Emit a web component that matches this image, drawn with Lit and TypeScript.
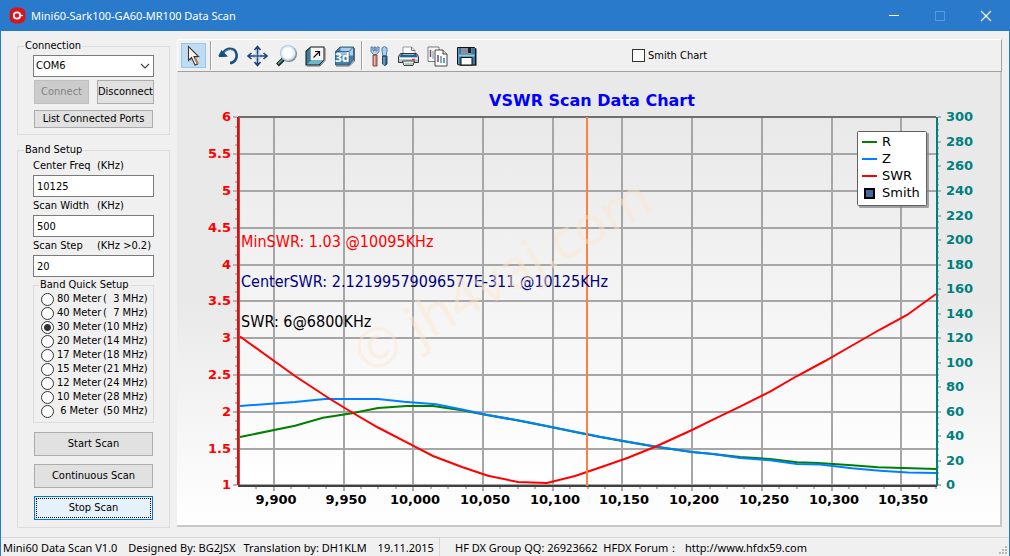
import { LitElement, html, svg, css } from "lit";
import { customElement, property, state } from "lit/decorators.js";

type Pt = [number, number];

const R_LINE: Pt[] = [
  [240, 437], [295, 425.7], [323, 417.7], [352, 413.3], [378, 408], [407, 406], [433, 406],
  [462, 410.3], [488, 415.3], [518, 420.5], [547, 426.3], [575, 432], [600, 437], [628, 442],
  [657, 447], [692, 452], [713, 454], [740, 457], [770, 459], [797, 462.3], [818, 463],
  [852, 465.3], [878, 467.3], [936, 469],
];
const Z_LINE: Pt[] = [
  [240, 406], [295, 402], [325, 399], [378, 399], [404, 401.7], [436, 404.3], [462, 409.5],
  [488, 415], [518, 420.3], [547, 426], [575, 431.7], [600, 436.7], [628, 441.7], [657, 446.7],
  [692, 452], [713, 454], [740, 458], [770, 460.3], [797, 463.9], [820, 464.4], [852, 468.3],
  [880, 470.7], [908, 472.5], [936, 473],
];
const SWR_LINE: Pt[] = [
  [240, 336.5], [295, 376], [330, 399], [353, 413], [378, 427.5], [413, 445.7], [433, 456],
  [462, 467], [488, 475.7], [518, 482], [547, 483], [575, 476], [600, 467.5], [628, 457.7],
  [657, 446], [692, 430], [713, 419.7], [740, 406.7], [770, 391.7], [797, 376], [825, 361],
  [853, 345], [880, 329.5], [907, 315], [936, 294],
];

const points = (line: Pt[]) => line.map((p) => p.join(",")).join(" ");
const range = (n: number) => Array.from({ length: n }, (_, i) => i);
const freqX = (f: number) => Math.floor(239 + (f - 9875) * 1.3945 + 0.45);
const swrY = (v: number) => Math.round(485.4 - (v - 1) * 73.6);
const ohmY = (v: number) => Math.round(485.4 - v * 1.2267);

@customElement("scan-chart")
class ScanChart extends LitElement {
  static styles = css`
    :host { display: block; }
    .chart { display: block; width: 100%; height: auto; }
    text { font-family: "DejaVu Sans", Verdana, sans-serif; font-size: 13px; }
    .title { font-size: 16px; font-weight: bold; fill: #0000ff; text-anchor: middle; }
    .axis { font-weight: bold; }
    .left { fill: #ff0000; text-anchor: end; }
    .right { fill: #008080; }
    .bottom { text-anchor: middle; }
    .note { font-family: "DejaVu Sans Condensed", "DejaVu Sans", Tahoma, sans-serif; font-size: 16px; }
    .red { fill: #ff0000; }
    .navy { fill: #000080; }
    .mark { font-family: "Noto Sans", sans-serif; font-size: 54px; fill: #ffe6cc; opacity: 0.45; }
    .grid { stroke: #a6a6a6; stroke-width: 2; }
    .tick { stroke: #b4b4b4; stroke-width: 2; }
    .series { fill: none; stroke-width: 2; }
  `;

  render() {
    const freqs = range(10).map((i) => 9900 + i * 50);
    const swrs = range(11).map((i) => 1 + i * 0.5);
    const ohms = range(16).map((i) => i * 20);
    return html`
      <svg class="chart" viewBox="177 72 825 455" role="img" aria-label="VSWR Scan Data Chart">
        <defs>
          <linearGradient id="panel" x1="0" y1="0" x2="0" y2="1">
            <stop offset="0" stop-color="#e9e9e9" /><stop offset="0.5" stop-color="#e9e9e9" />
            <stop offset="1" stop-color="#ffffff" />
          </linearGradient>
          <linearGradient id="plot" x1="0" y1="0" x2="0" y2="1">
            <stop offset="0" stop-color="#e9e9e9" /><stop offset="1" stop-color="#ffffff" />
          </linearGradient>
        </defs>
        <rect x="177" y="72" width="825" height="455" fill="#c8c8c8" />
        <rect x="177" y="72" width="823" height="453" fill="url(#panel)" />
        <rect x="239" y="117" width="698" height="368" fill="url(#plot)" />
        <text class="title" x="592" y="106">VSWR Scan Data Chart</text>

        ${freqs.map((f) => svg`<line class="grid" x1=${freqX(f)} x2=${freqX(f)} y1="117" y2="491" />`)}
        ${swrs.map((v) => svg`<line class="grid" x1="239" x2="936" y1=${swrY(v)} y2=${swrY(v)} />
          <line class="tick" x1="233" x2="237" y1=${swrY(v)} y2=${swrY(v)} />`)}
        ${range(40).map((i) => svg`<line class="tick" x1="235" x2="237" y1=${swrY(1 + i * 0.125)} y2=${swrY(1 + i * 0.125)} />`)}
        ${range(40).map((i) => svg`<line class="tick" x1=${freqX(9887.5 + i * 12.5)} x2=${freqX(9887.5 + i * 12.5)} y1="486" y2="489" />`)}
        ${ohms.map((v) => svg`<line class="tick" x1="938" x2="941" y1=${ohmY(v)} y2=${ohmY(v)} />`)}
        ${range(60).map((i) => svg`<line class="tick" x1="937" x2="939" y1=${ohmY(i * 5)} y2=${ohmY(i * 5)} />`)}

        <line x1="238" x2="936" y1="117" y2="117" stroke="#6e6e6e" stroke-width="2" />
        <line x1="238" x2="937" y1="486" y2="486" stroke="#404040" stroke-width="2" />
        <rect x="936" y="117" width="2" height="369" fill="#008080" />
        <rect x="237" y="117" width="2" height="368" fill="#ff0000" />
        <rect x="239" y="118" width="1" height="367" fill="#8c6060" />

        <polyline class="series" stroke="#008000" points=${points(R_LINE)} />
        <polyline class="series" stroke="#0080ff" points=${points(Z_LINE)} />
        <polyline class="series" stroke="#ff0000" points=${points(SWR_LINE)} />
        <line x1="587" x2="587" y1="117" y2="486" stroke="#ff8040" stroke-width="2" />

        ${swrs.map((v) => svg`<text class="axis left" x="231" y=${swrY(v) + 4}>${v}</text>`)}
        ${ohms.map((v) => svg`<text class="axis right" x="946" y=${ohmY(v) + 4}>${v}</text>`)}
        ${freqs.map((f) => svg`<text class="axis bottom" x=${freqX(f) + 2} y="504">${f.toLocaleString("en-US")}</text>`)}

        <text class="note red" x="241" y="247">MinSWR: 1.03 @10095KHz</text>
        <text class="note navy" x="241" y="287">CenterSWR: 2.12199579096577E-311 @10125KHz</text>
        <text class="note" x="241" y="327">SWR: 6@6800KHz</text>
        <text class="mark" transform="translate(368 375) rotate(-30)">© jh4vaj.com</text>

        <rect x="859" y="133" width="70" height="75" rx="1" fill="#808080" opacity="0.7" />
        <rect x="857.5" y="131.5" width="69" height="74" rx="1" fill="#fff" stroke="#606060" />
        <line x1="862" x2="877" y1="142" y2="142" stroke="#008000" stroke-width="2" />
        <line x1="862" x2="877" y1="159" y2="159" stroke="#0080ff" stroke-width="2" />
        <line x1="862" x2="877" y1="176" y2="176" stroke="#ff0000" stroke-width="2" />
        <rect x="865" y="189" width="9" height="9" fill="#4466a3" stroke="#000" stroke-width="2" />
        <text x="882" y="146">R</text>
        <text x="882" y="163">Z</text>
        <text x="882" y="180">SWR</text>
        <text x="882" y="197">Smith</text>
      </svg>
    `;
  }
}

const ICONS: Record<string, unknown> = {
  pointer: svg`<path d="M8 5l8.500 8.500h-4l3.500 7-2.500 1-3.300-7L8 17z" transform="translate(1 1)" fill="#777"/><path d="M7.500 3.500v14l3-3 3.500 7.500 2.500-1-3.500-7.500h4.500z" fill="#fff8ee" stroke="#433" stroke-width="1.100"/><path d="M14 15l3 6" stroke="#a87c5c" stroke-width="2"/>`,
  undo: svg`<path d="M6.500 11C10 4 19 4 20.500 11C21.500 16 18 20 14 20" fill="none" stroke="#174f80" stroke-width="2.500"/><path d="M2.500 12.500L5.500 7l6.500 6.500-4 .5H3z" fill="#174f80"/><path d="M8 9.500C11 5.800 16 5.800 18.500 8.500" fill="none" stroke="#5e98c6" stroke-width="1"/>`,
  move: svg`<path d="M12.500 4v18M3.500 13h18M9.500 7l3-3.500 3 3.500M9.500 19l3 3.500 3-3.500M6.500 10L3 13l3.500 3M18.500 10l3.500 3-3.500 3" fill="none" stroke="#1d3f7c" stroke-width="1.600"/><path d="M11 8v9M14 8v9M8 11.500h9M8 14.500h9" stroke="#9fb9dc" stroke-width=".6"/>`,
  zoom: svg`<path d="M9.500 16l-6 6" stroke="#222" stroke-width="4"/><path d="M9 16l-5 5" stroke="#48a090" stroke-width="1.700"/><circle cx="15" cy="11" r="8" fill="#858585"/><circle cx="14" cy="10" r="8" fill="#a9c3dc"/><circle cx="14" cy="10" r="7.200" fill="#d8e9f7"/><circle cx="13.800" cy="10" r="5.500" fill="#fff"/>`,
  depth: svg`<path d="M2.500 8l5-4.500h14v13.500l-5 5.500h-14z" fill="#111"/><path d="M3.500 8.500l4-4v13l-4 4z" fill="#367f9c"/><path d="M3.500 21.500l4.500-4.500h12.500l-4.500 4.500z" fill="#6fb6cf"/><path d="M7.500 4.500h13v12.500h-13z" fill="#f6f6f6"/><path d="M10.500 14.500l6-6M12 8.500H16.500V13" fill="none" stroke="#111" stroke-width="1.200"/><path d="M22 5v12.500l-5 5.500H4" fill="none" stroke="#666"/>`,
  three: svg`<path d="M3.500 8.500L8 4h13.500v13l-4.500 5H3.500z" fill="#427fa8"/><path d="M8.500 4.500h12.500v8H8.500z" fill="#a9d0f1"/><path d="M4 9h13v13H4z" fill="#3f83ab"/><path d="M5 9h12v4H5z" fill="#8fbde2"/><path d="M3.500 8.500h13.500v13.500H3.500zM3.500 8.500L8 4h13.500v13l-4.500 5M17 8.500L21.500 4" fill="none" stroke="#2b5a78" stroke-width=".9"/><path d="M22.500 5v13l-5 5H4" fill="none" stroke="#666"/>`,
  tools: svg`<path d="M4 4v4.500l2.500 3h3l2.500-3V4h-2v4H8.800V4H7.200v4H6V4z" fill="#b8d6f0" stroke="#466c9e" stroke-width=".9"/><path d="M6 12h4v11H6z" fill="#d88a78" stroke="#704038" stroke-width=".9"/><path d="M7.500 13v9" stroke="#f3b8a7"/><path d="M15 5q2.500-3 5 0v3l-1 5h-3l-1-5z" fill="#a9d0f1" stroke="#466c9e" stroke-width=".9"/><path d="M15.500 13h4.500v8q-2 3-4.500 0z" fill="#356a93" stroke="#193b56" stroke-width=".9"/><path d="M17 14v8" stroke="#9cc8e6"/>`,
  print: svg`<path d="M7 4h8.500l3.500 3.500v5H7z" fill="#fff" stroke="#999"/><path d="M15.500 4v3.500h3.500" fill="none" stroke="#777"/><path d="M4.500 10.500h16l2 3v6h-20v-6z" fill="#b4c8d8" stroke="#333"/><path d="M5 11h15l1.500 3h-18z" fill="#2a628a"/><path d="M7 11.500h11" stroke="#78c6e6"/><path d="M3 15.500h19" stroke="#fff"/><path d="M16 16.500h3" stroke="#f22" stroke-width="1.500"/><path d="M6.500 18h12l-1.500 4.500H8z" fill="#eee" stroke="#444"/><path d="M9 21h8" stroke="#58a890"/>`,
  copy: svg`<path d="M3 4h11v14.500H3z" fill="#fff" stroke="#777"/><path d="M5.500 7v7" stroke="#704080" stroke-width="1.500"/><path d="M8 8v8" stroke="#609080"/><path d="M10 7h8l4 4v12H10z" fill="#fff" stroke="#444"/><path d="M18 7v4h4" fill="#ddd" stroke="#444"/><path d="M13 12v7" stroke="#704090" stroke-width="1.500"/><path d="M16 13v7" stroke="#50a078" stroke-width="1.500"/><path d="M19 15v5" stroke="#4a70b8" stroke-width="1.500"/>`,
  save: svg`<path d="M5 5h17l1 1v17H6z" fill="#888"/><path d="M3.500 4.500h17l1 1v16.500H4.500l-1-1z" fill="#3a79a0" stroke="#111"/><path d="M4.500 5v16" stroke="#5aa0c8"/><path d="M7 5h10.500v6H7z" fill="#8a8fa0"/><path d="M14 5h3v5h-3z" fill="#222"/><path d="M5 12.500h15.500" stroke="#87c9e8" stroke-width="2"/><path d="M7 14.500h11v7.500H7z" fill="#fff" stroke="#111"/>`,
};

@customElement("tool-button")
class ToolButton extends LitElement {
  @property() icon = "pointer";
  @property() label = "";
  @property({ type: Boolean }) active = false;
  static styles = css`
    :host { display: block; }
    .tool { display: block; width: 25px; height: 25px; padding: 0; border: 1px solid transparent; background: none; }
    .active { background: #c0dcf3; border-color: #90c8f6; }
    .glyph { display: block; width: 25px; height: 25px; margin: -1px; overflow: visible; }
    .three { font: bold 12px "Noto Sans", sans-serif; fill: #fff; }
  `;
  render() {
    return html`<button class="tool ${this.active ? "active" : ""}" aria-label=${this.label}>
      <svg class="glyph" viewBox="0 0 25 25">
        ${ICONS[this.icon]}
        ${this.icon === "three" ? svg`<text class="three" x="3" y="19">3d</text>` : ""}
      </svg>
    </button>`;
  }
}

const BANDS = [
  ["80 Meter", "(\u00a0 3 MHz)"], ["40 Meter", "(\u00a0 7 MHz)"], ["30 Meter", "(10 MHz)"],
  ["20 Meter", "(14 MHz)"], ["17 Meter", "(18 MHz)"], ["15 Meter", "(21 MHz)"],
  ["12 Meter", "(24 MHz)"], ["10 Meter", "(28 MHz)"], ["\u00a06 Meter", "(50 MHz)"],
];
const FIELDS = [
  ["center", "Center Freq", "(KHz)", "10125"],
  ["width", "Scan Width", "(KHz)", "500"],
  ["step", "Scan Step", "(KHz >0.2)", "20"],
];

@customElement("app-root")
class AppRoot extends LitElement {
  @state() band = 2;
  static styles = css`
    :host {
      display: flex; flex-direction: column; min-height: 100vh; box-sizing: border-box;
      border: 1px solid #2a7acc; border-top: 0; background: #f0f0f0; color: #000;
      font: 11px/14px "DejaVu Sans Condensed", "DejaVu Sans", Tahoma, sans-serif;
    }
    * { box-sizing: border-box; }
    button, input, select { font: inherit; color: inherit; border-radius: 0; margin: 0; }
    .titlebar { display: flex; align-items: center; height: 31px; background: #2a7acc; color: #fff; padding-left: 8px; font: 11px/16px "Noto Sans", "Open Sans", sans-serif; }
    .logo { width: 17px; height: 17px; margin-right: 5px; }
    .name { flex: 1; }
    .win { width: 46px; height: 31px; border: 0; padding: 0; background: none; color: #fff; display: grid; place-items: center; }
    .win svg { width: 12px; height: 12px; }
    .dim { color: #6fa6df; }
    .body { flex: 1; display: flex; align-items: flex-start; padding: 8px 7px 9px 0; }
    .side { flex: none; width: 176px; padding: 0 7px 0 16px; display: flex; flex-direction: column; gap: 8px; }
    .group { margin: 0; padding: 2px 15px 6px; border: 1px solid #dcdcdc; min-width: 0; }
    .group legend { padding: 0 1px; margin-left: -9px; line-height: 14px; }
    .band { padding: 0 15px 7px; }
    .combo { position: relative; }
    .select { display: block; width: 100%; height: 22px; padding: 0 2px; border: 1px solid #7a7a7a; background: #fff; appearance: none; }
    .chevron { position: absolute; right: 4px; top: 7px; width: 10px; height: 8px; pointer-events: none; }
    .row { display: flex; justify-content: space-between; margin: 3px 0 6px 1px; }
    .btn { display: block; width: 100%; height: 24px; padding: 0; border: 1px solid #adadad; background: #e1e1e1; text-align: center; white-space: nowrap; }
    .row .connect { width: 55px; color: #838383; background: #cccccc; border-color: #bfbfbf; }
    .row .disconnect { width: 57px; }
    .short { height: 18px; }
    .inset { padding: 0 1px; }
    .actions { display: flex; flex-direction: column; gap: 8px; padding: 9px 1px 0; }
    .focused { background: #e5f1fb; border-color: #0078d7; outline: 1px dotted #000; outline-offset: -3px; }
    .caption { display: flex; height: 18px; align-items: center; }
    .caption-name { width: 64px; white-space: nowrap; }
    .field { display: block; width: 100%; height: 22px; border: 1px solid #7a7a7a; background: #fff; padding: 0 3px; outline: 0; }
    .quick { padding: 0 0 4px 7px; margin-top: 1px; }
    .quick legend { margin-left: -2px; }
    .option { display: flex; align-items: center; height: 14px; white-space: nowrap; }
    .radio { appearance: none; width: 13px; height: 13px; border: 1px solid #333; border-radius: 50%; background: #fff; margin-right: 3px; flex: none; }
    .radio:checked { background: radial-gradient(circle, #333 0 3px, #fff 4px); }
    .meter { width: 46px; }
    .main { flex: 1; min-width: 0; }
    .toolbar { display: flex; align-items: center; height: 33px; padding: 0 3px; border: 1px solid; border-color: #fff #a0a0a0 #a0a0a0 #fff; gap: 4px; }
    .sep { width: 2px; height: 29px; border-left: 1px solid #a0a0a0; border-right: 1px solid #fff; }
    .smith { display: flex; align-items: center; gap: 3px; margin-left: 149px; }
    .check { appearance: none; width: 13px; height: 13px; border: 1px solid #333; background: #fff; }
    .status { display: flex; height: 19px; border-top: 1px solid #d7d7d7; font: 11px/19px "Noto Sans", "Open Sans", sans-serif; white-space: pre; }
    .status-left { width: 438px; padding-left: 2px; }
    .status-right { flex: 1; border-left: 1px solid #d7d7d7; padding-left: 15px; }
    .gap { margin-left: 8px; }
    .grip { width: 11px; height: 11px; align-self: flex-end; }
  `;

  render() {
    return html`
      <header class="titlebar">
        <svg class="logo" viewBox="0 0 17 17"><rect x=".5" y=".5" width="16" height="16" rx="6" fill="#d9141e"/><circle cx="8" cy="8.500" r="3.200" fill="none" stroke="#fff" stroke-width="1.800"/><path d="M11 8.500h3" stroke="#fff" stroke-width="1.300"/></svg>
        <span class="name">Mini60-Sark100-GA60-MR100 Data Scan</span>
        <button class="win" aria-label="Minimize"><svg viewBox="0 0 12 12"><path d="M1 5.500h10" stroke="currentColor"/></svg></button>
        <button class="win dim" aria-label="Maximize" disabled><svg viewBox="0 0 12 12"><path d="M1.500 1.500h9v9h-9z" fill="none" stroke="currentColor" opacity=".7"/></svg></button>
        <button class="win" aria-label="Close"><svg viewBox="0 0 12 12"><path d="M1 1l10 10M11 1L1 11" stroke="currentColor" stroke-width="1.200"/></svg></button>
      </header>
      <div class="body">
        <aside class="side">
          <fieldset class="group">
            <legend>Connection</legend>
            <div class="combo">
              <select class="select" aria-label="Port"><option>COM6</option></select>
              <svg class="chevron" viewBox="0 0 10 8"><path d="M1 2l4 4 4-4" fill="none" stroke="#444" stroke-width="1.200"/></svg>
            </div>
            <div class="row">
              <button class="btn connect" disabled>Connect</button>
              <button class="btn disconnect">Disconnect</button>
            </div>
            <div class="inset"><button class="btn short">List Connected Ports</button></div>
          </fieldset>
          <fieldset class="group band">
            <legend>Band Setup</legend>
            ${FIELDS.map(([id, name, unit, value]) => html`
              <label class="caption" for=${id}><span class="caption-name">${name}</span>${unit}</label>
              <input class="field" id=${id} .value=${value} />`)}
            <fieldset class="group quick">
              <legend>Band Quick Setup</legend>
              ${BANDS.map(([name, freq], i) => html`
                <label class="option">
                  <input class="radio" type="radio" name="band" .checked=${i === this.band} @change=${() => (this.band = i)} />
                  <span class="meter">${name}</span><span>${freq}</span>
                </label>`)}
            </fieldset>
            <div class="actions">
              <button class="btn">Start Scan</button>
              <button class="btn">Continuous Scan</button>
              <button class="btn focused">Stop Scan</button>
            </div>
          </fieldset>
        </aside>
        <main class="main">
          <div class="toolbar">
            <tool-button icon="pointer" label="Select" active></tool-button>
            <span class="sep"></span>
            <tool-button icon="undo" label="Rotate"></tool-button>
            <tool-button icon="move" label="Move"></tool-button>
            <tool-button icon="zoom" label="Zoom"></tool-button>
            <tool-button icon="depth" label="Depth"></tool-button>
            <tool-button icon="three" label="3D"></tool-button>
            <span class="sep"></span>
            <tool-button icon="tools" label="Edit"></tool-button>
            <tool-button icon="print" label="Print"></tool-button>
            <tool-button icon="copy" label="Copy"></tool-button>
            <tool-button icon="save" label="Save"></tool-button>
            <label class="smith"><input class="check" type="checkbox" />Smith Chart</label>
          </div>
          <scan-chart></scan-chart>
        </main>
      </div>
      <footer class="status">
        <span class="status-left"><span>Mini60 Data Scan V1.0</span><span class="gap"> Designed By: BG2JSX</span><span class="gap">Translation by: DH1KLM</span><span class="gap"> 19.11.2015</span></span>
        <span class="status-right">HF DX Group QQ: 26923662  HFDX Forum：  http://www.hfdx59.com</span>
        <svg class="grip" viewBox="0 0 11 11" fill="#b8b8b8"><path d="M7 1h2v2H7zM7 4h2v2H7zM4 4h2v2H4zM7 7h2v2H7zM4 7h2v2H4zM1 7h2v2H1z"/></svg>
      </footer>
    `;
  }
}
